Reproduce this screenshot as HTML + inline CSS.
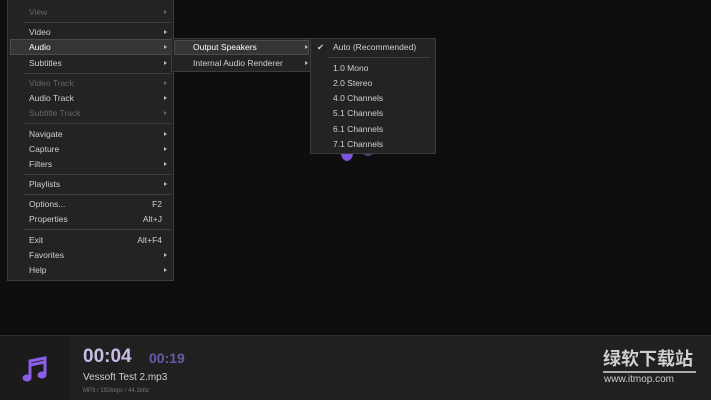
<!DOCTYPE html>
<html><head><style>
*{margin:0;padding:0;box-sizing:border-box}
body{width:711px;height:400px;background:#0e0e0e;position:relative;overflow:hidden;font-family:"Liberation Sans",sans-serif;font-size:8.5px;color:#d0d0d0}
.m{position:absolute;background:#232323;border:1px solid #3c3c3c}
.i{position:absolute;height:14px;line-height:14px;white-space:nowrap}
.d{color:#666}
.a{position:absolute;width:0;height:0;border-left:3px solid #bbb;border-top:2.5px solid transparent;border-bottom:2.5px solid transparent}
.s{position:absolute;height:1px;background:#3e3e3e}
.k{position:absolute;text-align:right;height:14px;line-height:14px}
</style></head><body>
<div class="m" style="left:7px;top:-2px;width:167px;height:283px"></div>
<div style="position:absolute;left:10px;top:39px;width:162px;height:16px;background:#353535;border:1px solid #4a4a4a"></div>
<div class="i d" style="left:29px;top:5px">View</div><div class="a" style="left:164px;top:10px;border-left-color:#666"></div>
<div class="s" style="left:24px;top:22px;width:147px"></div>
<div class="i" style="left:29px;top:25px">Video</div><div class="a" style="left:164px;top:30px"></div>
<div class="i" style="left:29px;top:40px;color:#fff">Audio</div><div class="a" style="left:164px;top:45px"></div>
<div class="i" style="left:29px;top:56px">Subtitles</div><div class="a" style="left:164px;top:61px"></div>
<div class="s" style="left:24px;top:73px;width:147px"></div>
<div class="i d" style="left:29px;top:76px">Video Track</div><div class="a" style="left:164px;top:81px;border-left-color:#666"></div>
<div class="i" style="left:29px;top:91px">Audio Track</div><div class="a" style="left:164px;top:96px"></div>
<div class="i d" style="left:29px;top:106px">Subtitle Track</div><div class="a" style="left:164px;top:111px;border-left-color:#666"></div>
<div class="s" style="left:24px;top:123px;width:147px"></div>
<div class="i" style="left:29px;top:127px">Navigate</div><div class="a" style="left:164px;top:132px"></div>
<div class="i" style="left:29px;top:142px">Capture</div><div class="a" style="left:164px;top:147px"></div>
<div class="i" style="left:29px;top:157px">Filters</div><div class="a" style="left:164px;top:162px"></div>
<div class="s" style="left:24px;top:174px;width:147px"></div>
<div class="i" style="left:29px;top:177px">Playlists</div><div class="a" style="left:164px;top:182px"></div>
<div class="s" style="left:24px;top:194px;width:147px"></div>
<div class="i" style="left:29px;top:197px">Options...</div><div class="k" style="left:120px;width:42px;top:197px">F2</div>
<div class="i" style="left:29px;top:212px">Properties</div><div class="k" style="left:120px;width:42px;top:212px">Alt+J</div>
<div class="s" style="left:24px;top:229px;width:147px"></div>
<div class="i" style="left:29px;top:233px">Exit</div><div class="k" style="left:120px;width:42px;top:233px">Alt+F4</div>
<div class="i" style="left:29px;top:248px">Favorites</div><div class="a" style="left:164px;top:253px"></div>
<div class="i" style="left:29px;top:263px">Help</div><div class="a" style="left:164px;top:268px"></div>

<div class="m" style="left:171px;top:38px;width:140px;height:34px"></div>
<div style="position:absolute;left:174px;top:40px;width:135px;height:15px;background:#353535;border:1px solid #4a4a4a"></div>
<div class="i" style="left:193px;top:40px;color:#fff">Output Speakers</div><div class="a" style="left:305px;top:45px"></div>
<div class="i" style="left:193px;top:56px">Internal Audio Renderer</div><div class="a" style="left:305px;top:61px"></div>

<div style="position:absolute;left:341px;top:145px;width:12px;height:16px;border-radius:50%;background:#7b55e0"></div>
<div style="position:absolute;left:362px;top:146px;width:12px;height:10px;border-radius:50%;background:#4a3c7a"></div>
<div class="m" style="left:310px;top:38px;width:126px;height:116px"></div>
<div class="i" style="left:317px;top:40px;color:#ccc">✔</div>
<div class="i" style="left:333px;top:40px">Auto (Recommended)</div>
<div class="s" style="left:328px;top:57px;width:102px"></div>
<div class="i" style="left:333px;top:61px">1.0 Mono</div>
<div class="i" style="left:333px;top:76px">2.0 Stereo</div>
<div class="i" style="left:333px;top:91px">4.0 Channels</div>
<div class="i" style="left:333px;top:106px">5.1 Channels</div>
<div class="i" style="left:333px;top:122px">6.1 Channels</div>
<div class="i" style="left:333px;top:137px">7.1 Channels</div>

<div style="position:absolute;left:0;top:335px;width:711px;height:65px;background:#202020;border-top:1px solid #2e2e2e"></div>
<div style="position:absolute;left:0;top:336px;width:70px;height:64px;background:#1b1b1b"></div>
<svg style="position:absolute;left:22px;top:356px" width="26" height="28" viewBox="0 0 26 28"><path d="M8 22V5l15-3v16" stroke="#8a5ee8" stroke-width="3" fill="none"/><path d="M8 9l15-3" stroke="#8a5ee8" stroke-width="3"/><ellipse cx="5" cy="22" rx="4.5" ry="3.5" fill="#8a5ee8"/><ellipse cx="20" cy="19" rx="4.5" ry="3.5" fill="#8a5ee8"/></svg>
<div style="position:absolute;left:83px;top:346px;font-size:19px;font-weight:bold;color:#c9bde8">00:04</div>
<div style="position:absolute;left:149px;top:350px;font-size:14px;font-weight:bold;color:#6a5aa8">00:19</div>
<div style="position:absolute;left:83px;top:372px;font-size:10px;color:#cfcfcf">Vessoft Test 2.mp3</div>
<div style="position:absolute;left:83px;top:388px;font-size:6px;color:#777">MP3 / 192kbps / 44.1khz</div>
<div style="position:absolute;left:603px;top:348px;font-size:18px;font-weight:bold;color:#cfcfcf;font-family:'Noto Sans CJK SC',sans-serif;line-height:20px">绿软下载站</div>
<div style="position:absolute;left:603px;top:371px;width:93px;height:2px;background:#aaa"></div>
<div style="position:absolute;left:604px;top:374px;font-size:10px;color:#ccc">www.itmop.com</div>
</body></html>
